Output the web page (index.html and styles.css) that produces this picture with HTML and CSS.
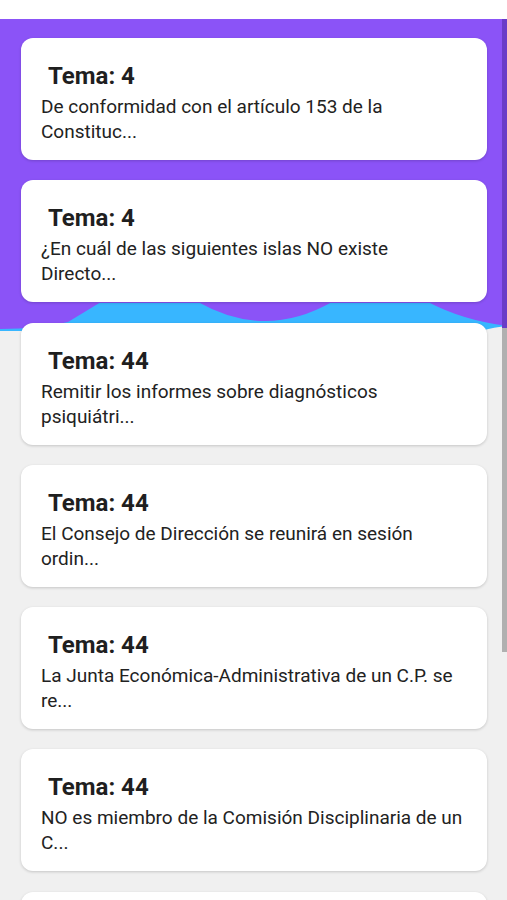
FILE: index.html
```html
<!DOCTYPE html>
<html>
<head>
<meta charset=utf-8>
<title>Preguntas por tema</title>
<link rel="stylesheet" href="styles.css">
</head>
<body>
<div class="statusbar"></div>
<main class="feed">
  <div class="hero">
    <div class="hero-fill"></div>
    <svg class="wave" viewBox="0 0 507 45" preserveAspectRatio="none">
      <path fill="#38b6ff" d="M0,0 H507 V36 Q495,37 480,41 L0,41 Z"/>
      <rect fill="#8b53f7" x="0" y="0" width="507" height="13"/>
      <path fill="#8b53f7" d="M0,12 H101 L68,32 Q40,39 0,39 Z"/>
      <path fill="#8b53f7" d="M198,12 Q265,50 332,12 Z"/>
      <path fill="#8b53f7" d="M428,12 H507 V36 Q462,30 428,12 Z"/>
    </svg>
  </div>

  <ul class="cards">
    <li class="card">
      <h2 class="card-title">Tema: 4</h2>
      <p class="card-text">De conformidad con el artículo 153 de la Constituc...</p>
    </li>
    <li class="card">
      <h2 class="card-title">Tema: 4</h2>
      <p class="card-text">¿En cuál de las siguientes islas NO existe Directo...</p>
    </li>
    <li class="card">
      <h2 class="card-title">Tema: 44</h2>
      <p class="card-text">Remitir los informes sobre diagnósticos psiquiátri...</p>
    </li>
    <li class="card">
      <h2 class="card-title">Tema: 44</h2>
      <p class="card-text">El Consejo de Dirección se reunirá en sesión ordin...</p>
    </li>
    <li class="card">
      <h2 class="card-title">Tema: 44</h2>
      <p class="card-text">La Junta Económica-Administrativa de un C.P. se re...</p>
    </li>
    <li class="card">
      <h2 class="card-title">Tema: 44</h2>
      <p class="card-text">NO es miembro de la Comisión Disciplinaria de un C...</p>
    </li>
    <li class="card card-peek"></li>
  </ul>

  <div class="scroll-thumb"></div>
</main>
</body>
</html>
```

FILE: styles.css
```css
html, body
{
	margin: 0;
	padding: 0;
	background-color: #f0f0f0;
	font-family: Roboto, "Liberation Sans", Arial, sans-serif;
	color: #222;
}
.statusbar
{
	height: 19px;
	background-color: #fff;
}
.feed
{
	position: relative;
	height: 881px;
	overflow: hidden;
	background-color: #f0f0f0;
}

/* purple header with the wave, sits behind the first cards */
.hero
{
	position: absolute;
	top: 0;
	left: 0;
	right: 0;
	height: 316px;
	display: flex;
	flex-direction: column;
}
.hero-fill
{
	flex: 1;
	background-color: #8b53f7;
}
.wave
{
	display: block;
	width: 100%;
	height: 45px;
}

.cards
{
	position: relative;
	list-style: none;
	margin: 0;
	padding: 19px 20px 0 21px;
	display: flex;
	flex-direction: column;
	gap: 20.3px;
}
.card
{
	background-color: #fff;
	border-radius: 12px;
	padding: 24px 20px 16px 20px;
	box-shadow: 0 1px 3px rgba(0,0,0,.18);
	min-height: 82px;
}
.card-title
{
	margin: 0 0 4px 0;
	padding-left: 7px;
	font-size: 24px;
	line-height: 28px;
	font-weight: bold;
	color: #1f1f1f;
}
.card-text
{
	margin: 0;
	font-size: 19px;
	line-height: 25px;
	color: #222;
}

.scroll-thumb
{
	position: absolute;
	top: 0;
	right: 0;
	width: 5px;
	height: 633px;
	background: linear-gradient(to bottom, #6a3cc8 0, #6a3cc8 309px, #b0b0b0 309px);
}
```
